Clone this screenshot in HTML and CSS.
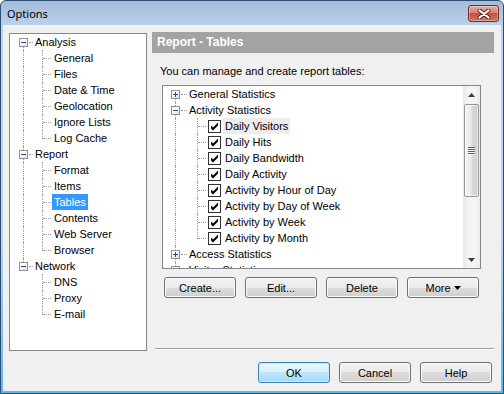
FILE: index.html
```html
<!DOCTYPE html>
<html>
	<head>
		<meta charset="UTF-8">
		<title>Options</title>
		<link rel="stylesheet" href="styles.css">
	</head>
	<body>
		<div class="window">
			<div class="titlebar">
				<span class="caption">Options</span>
				<span class="close">
					<svg width="14" height="10" viewBox="0 0 14 10"><path d="M2.5 1.5l9 7M11.5 1.5l-9 7" stroke="#5a1f18" stroke-width="4" stroke-linecap="round"/><path d="M2.5 1.5l9 7M11.5 1.5l-9 7" stroke="#fff" stroke-width="2.2" stroke-linecap="round"/></svg>
				</span>
			</div>
			<div class="client">
				<div class="main">
					<div class="tree">
						<div class="row"><span class="node next"><span class="box minus"></span><span class="hl"></span></span><span class="label">Analysis</span></div>
						<div class="row"><span class="guide line"></span><span class="branch"></span><span class="label">General</span></div>
						<div class="row"><span class="guide line"></span><span class="branch"></span><span class="label">Files</span></div>
						<div class="row"><span class="guide line"></span><span class="branch"></span><span class="label">Date &amp; Time</span></div>
						<div class="row"><span class="guide line"></span><span class="branch"></span><span class="label">Geolocation</span></div>
						<div class="row"><span class="guide line"></span><span class="branch"></span><span class="label">Ignore Lists</span></div>
						<div class="row"><span class="guide line"></span><span class="branch last"></span><span class="label">Log Cache</span></div>
						<div class="row"><span class="node prev next"><span class="box minus"></span><span class="hl"></span></span><span class="label">Report</span></div>
						<div class="row"><span class="guide line"></span><span class="branch"></span><span class="label">Format</span></div>
						<div class="row"><span class="guide line"></span><span class="branch"></span><span class="label">Items</span></div>
						<div class="row"><span class="guide line"></span><span class="branch"></span><span class="label selected">Tables</span></div>
						<div class="row"><span class="guide line"></span><span class="branch"></span><span class="label">Contents</span></div>
						<div class="row"><span class="guide line"></span><span class="branch"></span><span class="label">Web Server</span></div>
						<div class="row"><span class="guide line"></span><span class="branch last"></span><span class="label">Browser</span></div>
						<div class="row"><span class="node prev"><span class="box minus"></span><span class="hl"></span></span><span class="label">Network</span></div>
						<div class="row"><span class="guide"></span><span class="branch"></span><span class="label">DNS</span></div>
						<div class="row"><span class="guide"></span><span class="branch"></span><span class="label">Proxy</span></div>
						<div class="row"><span class="guide"></span><span class="branch last"></span><span class="label">E-mail</span></div>
					</div>
					<div class="panel">
						<div class="panel-title">Report - Tables</div>
						<div class="desc">You can manage and create report tables:</div>
						<div class="listbox">
							<div class="list">
								<div class="row"><span class="node next"><span class="box plus"></span><span class="hl"></span></span><span class="label">General Statistics</span></div>
								<div class="row"><span class="node prev next"><span class="box minus"></span><span class="hl"></span></span><span class="label">Activity Statistics</span></div>
								<div class="row"><span class="guide line"></span><span class="branch"></span><span class="check"><svg width="13" height="13" viewBox="0 0 13 13"><rect x="0.5" y="0.5" width="12" height="12" fill="#fff" stroke="#333"/><path d="M3 5.5l2 2 5-5v3l-5 5-2-2z" fill="#000"/></svg></span><span class="label inactive">Daily Visitors</span></div>
								<div class="row"><span class="guide line"></span><span class="branch"></span><span class="check"><svg width="13" height="13" viewBox="0 0 13 13"><rect x="0.5" y="0.5" width="12" height="12" fill="#fff" stroke="#333"/><path d="M3 5.5l2 2 5-5v3l-5 5-2-2z" fill="#000"/></svg></span><span class="label">Daily Hits</span></div>
								<div class="row"><span class="guide line"></span><span class="branch"></span><span class="check"><svg width="13" height="13" viewBox="0 0 13 13"><rect x="0.5" y="0.5" width="12" height="12" fill="#fff" stroke="#333"/><path d="M3 5.5l2 2 5-5v3l-5 5-2-2z" fill="#000"/></svg></span><span class="label">Daily Bandwidth</span></div>
								<div class="row"><span class="guide line"></span><span class="branch"></span><span class="check"><svg width="13" height="13" viewBox="0 0 13 13"><rect x="0.5" y="0.5" width="12" height="12" fill="#fff" stroke="#333"/><path d="M3 5.5l2 2 5-5v3l-5 5-2-2z" fill="#000"/></svg></span><span class="label">Daily Activity</span></div>
								<div class="row"><span class="guide line"></span><span class="branch"></span><span class="check"><svg width="13" height="13" viewBox="0 0 13 13"><rect x="0.5" y="0.5" width="12" height="12" fill="#fff" stroke="#333"/><path d="M3 5.5l2 2 5-5v3l-5 5-2-2z" fill="#000"/></svg></span><span class="label">Activity by Hour of Day</span></div>
								<div class="row"><span class="guide line"></span><span class="branch"></span><span class="check"><svg width="13" height="13" viewBox="0 0 13 13"><rect x="0.5" y="0.5" width="12" height="12" fill="#fff" stroke="#333"/><path d="M3 5.5l2 2 5-5v3l-5 5-2-2z" fill="#000"/></svg></span><span class="label">Activity by Day of Week</span></div>
								<div class="row"><span class="guide line"></span><span class="branch"></span><span class="check"><svg width="13" height="13" viewBox="0 0 13 13"><rect x="0.5" y="0.5" width="12" height="12" fill="#fff" stroke="#333"/><path d="M3 5.5l2 2 5-5v3l-5 5-2-2z" fill="#000"/></svg></span><span class="label">Activity by Week</span></div>
								<div class="row"><span class="guide line"></span><span class="branch last"></span><span class="check"><svg width="13" height="13" viewBox="0 0 13 13"><rect x="0.5" y="0.5" width="12" height="12" fill="#fff" stroke="#333"/><path d="M3 5.5l2 2 5-5v3l-5 5-2-2z" fill="#000"/></svg></span><span class="label">Activity by Month</span></div>
								<div class="row"><span class="node prev next"><span class="box plus"></span><span class="hl"></span></span><span class="label">Access Statistics</span></div>
								<div class="row"><span class="node prev next"><span class="box plus"></span><span class="hl"></span></span><span class="label">Visitor Statistics</span></div>
							</div>
							<div class="scrollbar">
								<div class="sb-btn"><svg width="7" height="4" viewBox="0 0 7 4"><path d="M3.5 0L7 4H0z" fill="#3c3c3c"/></svg></div>
								<div class="sb-thumb"><span class="grip"></span></div>
								<div class="sb-track"></div>
								<div class="sb-btn"><svg width="7" height="4" viewBox="0 0 7 4"><path d="M0 0h7L3.5 4z" fill="#3c3c3c"/></svg></div>
							</div>
						</div>
						<div class="actions">
							<button class="btn">Create...</button>
							<button class="btn">Edit...</button>
							<button class="btn">Delete</button>
							<button class="btn">More<svg class="arrow" width="7" height="4" viewBox="0 0 7 4"><path d="M0 0h7L3.5 4z" fill="#000"/></svg></button>
						</div>
						<div class="sep"></div>
					</div>
				</div>
				<div class="footer">
					<button class="btn default">OK</button>
					<button class="btn">Cancel</button>
					<button class="btn">Help</button>
				</div>
			</div>
		</div>
	</body>
</html>
```

FILE: styles.css
```css
*{
	margin: 0;
	padding: 0;
	box-sizing: border-box;
}
body{
	width: 504px;
	height: 394px;
	overflow: hidden;
	background: #fff;
	font: 11px "Liberation Sans", Arial, sans-serif;
	color: #000;
}
.window{
	width: 504px;
	height: 394px;
	border: 1px solid #2e4d72;
	border-radius: 6px 6px 0 0;
	background: linear-gradient(#a3bcdb, #bad1ea 24px, #bcd3ea 60%, #5db8e8);
	display: flex;
	flex-direction: column;
}
.titlebar{
	height: 24px;
	display: flex;
	justify-content: space-between;
	align-items: flex-start;
	padding: 0 4px 0 6px;
}
.caption{
	font: 11px "Noto Sans", sans-serif;
	line-height: 16px;
	padding-top: 5px;
}
.close{
	width: 31px;
	height: 17px;
	margin-top: 4px;
	border: 1px solid #6e2b24;
	border-radius: 3px;
	background: linear-gradient(#e9aca2, #d7826f 45%, #c4513b 50%, #d27461);
	box-shadow: inset 0 0 0 1px rgba(255,255,255,0.35);
	display: flex;
	align-items: center;
	justify-content: center;
}
.client{
	flex: 1;
	margin: 0 2px 2px 2px;
	background: #f0f0f0;
	padding: 8px 7px 0 6px;
	display: flex;
	flex-direction: column;
}
.main{
	display: flex;
	gap: 5px;
	height: 318px;
}

/* tree views */
.tree{
	width: 138px;
	border: 1px solid #828790;
	background: #fff;
	padding-left: 9px;
}
.row{
	height: 16px;
	display: flex;
	align-items: flex-start;
	white-space: nowrap;
}
.node, .guide, .branch{
	position: relative;
	height: 16px;
	flex: none;
}
.node{
	width: 14px;
	display: flex;
	align-items: flex-start;
}
.node.prev::before{
	content: "";
	position: absolute;
	left: 4px;
	top: 0;
	height: 4px;
	border-left: 1px dotted #a0a0a0;
}
.node.next::after{
	content: "";
	position: absolute;
	left: 4px;
	top: 13px;
	bottom: 0;
	border-left: 1px dotted #a0a0a0;
}
.box{
	width: 9px;
	height: 9px;
	margin-top: 4px;
	border: 1px solid #939393;
	background: linear-gradient(135deg, #fff 35%, #d6dbe2);
	position: relative;
	flex: none;
}
.box::before{
	content: "";
	position: absolute;
	left: 1px;
	top: 3px;
	width: 5px;
	height: 1px;
	background: #1d4d8a;
}
.box.plus::after{
	content: "";
	position: absolute;
	left: 3px;
	top: 1px;
	width: 1px;
	height: 5px;
	background: #1d4d8a;
}
.hl{
	flex: 1;
	margin: 8px 0 0 1px;
	border-top: 1px dotted #a0a0a0;
}
.guide{
	width: 19px;
}
.guide.line::before, .branch::before{
	content: "";
	position: absolute;
	left: 4px;
	top: 0;
	bottom: 0;
	border-left: 1px dotted #a0a0a0;
}
.branch{
	width: 14px;
}
.branch.last::before{
	bottom: 7px;
}
.branch::after{
	content: "";
	position: absolute;
	left: 5px;
	top: 8px;
	width: 8px;
	border-top: 1px dotted #a0a0a0;
}
.label{
	height: 16px;
	line-height: 16px;
	padding: 0 2px;
}
.selected{
	background: #3399ff;
	color: #fff;
}
.inactive{
	background: #ececec;
}

/* right panel */
.panel{
	width: 342px;
	margin-top: -1px;
	display: flex;
	flex-direction: column;
}
.panel-title{
	height: 21px;
	line-height: 21px;
	padding-left: 5px;
	background: #a3a3a3;
	color: #fff;
	font-weight: bold;
	font-size: 12px;
}
.desc{
	margin: 10px 0 0 8px;
	line-height: 16px;
}
.listbox{
	width: 319px;
	height: 184px;
	margin: 6px 0 0 10px;
	border: 1px solid #828790;
	background: #fff;
	display: flex;
}
.list{
	flex: 1;
	overflow: hidden;
	padding-left: 8px;
}
.list .node{
	width: 16px;
}
.list .guide{
	width: 22px;
}
.list .branch{
	width: 15px;
}
.check{
	width: 13px;
	height: 13px;
	margin: 2px 2px 0 0;
	flex: none;
}
.check svg{
	display: block;
}
.scrollbar{
	width: 17px;
	display: flex;
	flex-direction: column;
	background: linear-gradient(90deg, #e7e7e7, #f4f4f4 30%, #f4f4f4 70%, #ececec);
}
.sb-btn{
	height: 17px;
	display: flex;
	align-items: center;
	justify-content: center;
}
.sb-thumb{
	height: 93px;
	margin: 1px 1px 0 1px;
	border: 1px solid #979797;
	border-radius: 2px;
	background: linear-gradient(90deg, #f3f3f3, #e9e9e9 45%, #d9d9d9 55%, #cdcdcd);
	box-shadow: inset 0 0 0 1px rgba(255,255,255,0.6);
	display: flex;
	align-items: center;
	justify-content: center;
}
.grip{
	width: 7px;
	height: 8px;
	background: repeating-linear-gradient(#5e5e5e 0, #5e5e5e 1px, #f8f8f8 1px, #f8f8f8 2px);
}
.sb-track{
	flex: 1;
}
.actions{
	display: flex;
	gap: 9px;
	margin: 8px 0 0 12px;
}
.btn{
	width: 72px;
	height: 21px;
	border: 1px solid #707070;
	border-radius: 3px;
	background: linear-gradient(#f2f2f2, #ebebeb 50%, #dddddd 50%, #cfcfcf);
	box-shadow: inset 0 0 0 1px #fbfbfb;
	font: 11px "Liberation Sans", Arial, sans-serif;
	color: #000;
	display: flex;
	align-items: center;
	justify-content: center;
}
.btn .arrow{
	margin-left: 3px;
}
.btn.default{
	border-color: #3c7fb1;
	background: linear-gradient(#eaf6fd, #d9f0fc 50%, #bee6fd 50%, #a7d9f5);
	box-shadow: inset 0 0 0 1px #c9ecfc;
}
.sep{
	margin: auto 0 1px 3px;
	border-top: 1px solid #a0a0a0;
	border-bottom: 1px solid #fff;
}
.footer{
	display: flex;
	justify-content: flex-end;
	gap: 9px;
	margin: 11px 2px 0 0;
}
```
